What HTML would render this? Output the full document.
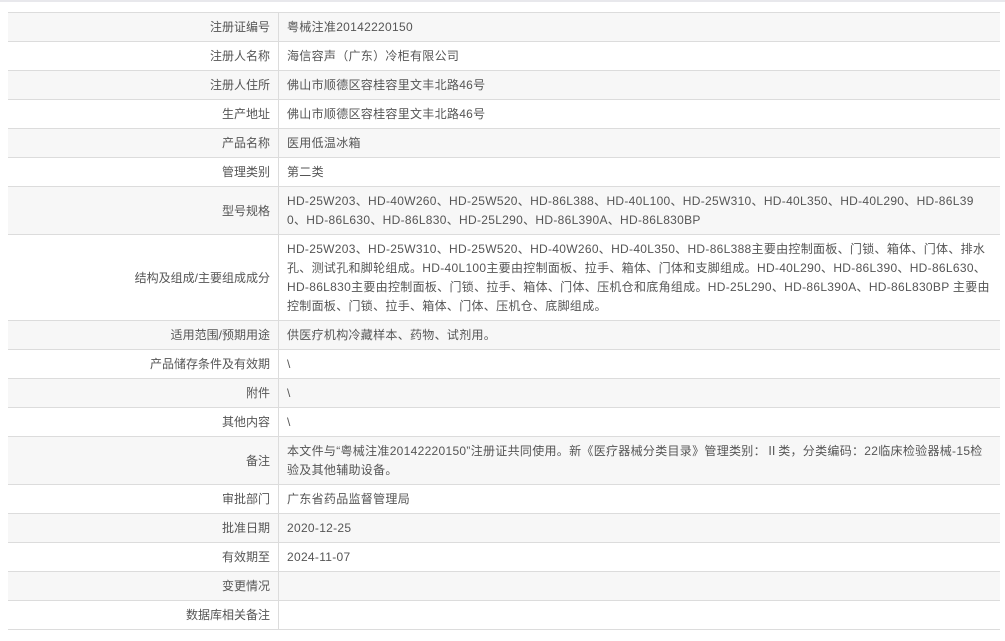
<!DOCTYPE html>
<html><head><meta charset="utf-8"><style>
html,body{margin:0;padding:0;background:#fff;}
body{width:1005px;height:641px;overflow:hidden;position:relative;font-family:"Liberation Sans","Noto Sans CJK SC",sans-serif;font-size:12px;color:#555;}
.top{position:absolute;left:0;top:0;width:1005px;height:2px;background:#e8e8ec;}
table{position:absolute;left:8px;top:12px;width:992px;border-collapse:collapse;table-layout:fixed;}
td{border-top:1px solid #dcdcdc;border-bottom:1px solid #dcdcdc;padding:5px 8px 4px 8px;line-height:19px;vertical-align:middle;word-break:break-all;letter-spacing:0.3px;}
td.l{width:254px;text-align:right;border-right:1px solid #dcdcdc;letter-spacing:0;}
tr:nth-child(odd) td{background:#f7f7f7;}
tr:nth-child(even) td{background:#fff;}
</style></head><body>
<div class="top"></div>
<table>
<tr><td class="l">注册证编号</td><td>粤械注准20142220150</td></tr>
<tr><td class="l">注册人名称</td><td>海信容声（广东）冷柜有限公司</td></tr>
<tr><td class="l">注册人住所</td><td>佛山市顺德区容桂容里文丰北路46号</td></tr>
<tr><td class="l">生产地址</td><td>佛山市顺德区容桂容里文丰北路46号</td></tr>
<tr><td class="l">产品名称</td><td>医用低温冰箱</td></tr>
<tr><td class="l">管理类别</td><td>第二类</td></tr>
<tr><td class="l">型号规格</td><td>HD-25W203、HD-40W260、HD-25W520、HD-86L388、HD-40L100、HD-25W310、HD-40L350、HD-40L290、HD-86L390、HD-86L630、HD-86L830、HD-25L290、HD-86L390A、HD-86L830BP</td></tr>
<tr><td class="l">结构及组成/主要组成成分</td><td>HD-25W203、HD-25W310、HD-25W520、HD-40W260、HD-40L350、HD-86L388主要由控制面板、门锁、箱体、门体、排水孔、测试孔和脚轮组成。HD-40L100主要由控制面板、拉手、箱体、门体和支脚组成。HD-40L290、HD-86L390、HD-86L630、HD-86L830主要由控制面板、门锁、拉手、箱体、门体、压机仓和底角组成。HD-25L290、HD-86L390A、HD-86L830BP 主要由控制面板、门锁、拉手、箱体、门体、压机仓、底脚组成。</td></tr>
<tr><td class="l">适用范围/预期用途</td><td>供医疗机构冷藏样本、药物、试剂用。</td></tr>
<tr><td class="l">产品储存条件及有效期</td><td>\</td></tr>
<tr><td class="l">附件</td><td>\</td></tr>
<tr><td class="l">其他内容</td><td>\</td></tr>
<tr><td class="l">备注</td><td>本文件与“粤械注准20142220150”注册证共同使用。新《医疗器械分类目录》管理类别：Ⅱ类，分类编码：22临床检验器械-15检验及其他辅助设备。</td></tr>
<tr><td class="l">审批部门</td><td>广东省药品监督管理局</td></tr>
<tr><td class="l">批准日期</td><td>2020-12-25</td></tr>
<tr><td class="l">有效期至</td><td>2024-11-07</td></tr>
<tr><td class="l">变更情况</td><td></td></tr>
<tr><td class="l">数据库相关备注</td><td></td></tr>
</table>
</body></html>
